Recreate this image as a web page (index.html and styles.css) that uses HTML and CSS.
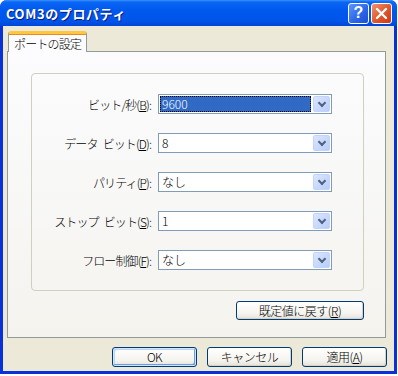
FILE: index.html
```html
<!DOCTYPE html>
<html lang="ja">
<head>
  <meta charset="UTF-8">
  <title>COM3のプロパティ</title>
  <link rel="stylesheet" href="styles.css">
</head>
<body>

<div class="window">
  <div class="titlebar">
    <span class="title">COM3のプロパティ</span>
    <div class="capBtn help">?</div>
    <div class="capBtn close">
      <svg width="13" height="13" viewBox="0 0 13 13"><path d="M2 2 L11 11 M11 2 L2 11" stroke="#fff" stroke-width="2.4" stroke-linecap="round"/></svg>
    </div>
  </div>

  <div class="client">
    <div class="tabs">
      <div class="tab active">ポートの設定</div>
    </div>

    <div class="panel">
      <div class="group">
        <div class="row">
          <label>ビット/秒(<u>B</u>):</label>
          <div class="combo"><span class="value selected">9600</span><span class="drop"></span></div>
        </div>
        <div class="row">
          <label>データ&ensp;ビット(<u>D</u>):</label>
          <div class="combo"><span class="value">8</span><span class="drop"></span></div>
        </div>
        <div class="row">
          <label>パリティ(<u>P</u>):</label>
          <div class="combo"><span class="value">なし</span><span class="drop"></span></div>
        </div>
        <div class="row">
          <label>ストップ&ensp;ビット(<u>S</u>):</label>
          <div class="combo"><span class="value">1</span><span class="drop"></span></div>
        </div>
        <div class="row">
          <label>フロー制御(<u>F</u>):</label>
          <div class="combo"><span class="value">なし</span><span class="drop"></span></div>
        </div>
      </div>
      <div class="resetRow">
        <button class="btn reset">既定値に戻す(<u>R</u>)</button>
      </div>
    </div>

    <div class="buttons">
      <button class="btn default">OK</button>
      <button class="btn">キャンセル</button>
      <button class="btn">適用(<u>A</u>)</button>
    </div>
  </div>
</div>

</body>
</html>
```

FILE: styles.css
```css
* {
  box-sizing: border-box;
  margin: 0;
  padding: 0;
}

body {
  background-color: #fff;
  font-family: "Noto Sans CJK JP", "DejaVu Sans", sans-serif;
  font-size: 12px;
  font-weight: 300;
  color: #000;
}

.window {
  width: 397px;
  height: 374px;
  display: flex;
  flex-direction: column;
  background: #0831d9;
  border-radius: 7px 7px 0 0;
}

.titlebar {
  height: 26px;
  display: flex;
  align-items: center;
  padding: 0 5px 0 6px;
  border-radius: 7px 7px 0 0;
  background: linear-gradient(#3d95ff 0, #0a66f4 2px, #0058ee 40%, #0055e8 80%, #0046d8 100%);
}

.title {
  flex: 1;
  color: #fff;
  font-weight: bold;
  font-size: 13px;
  letter-spacing: 0.6px;
  text-shadow: 1px 1px #0a1883;
}

.capBtn {
  width: 21px;
  height: 21px;
  border: 1px solid #fff;
  border-radius: 3px;
  display: flex;
  align-items: center;
  justify-content: center;
  margin-left: 2px;
}

.help {
  background: linear-gradient(135deg, #5d95ff, #2a64e6 60%, #1c4fd0);
  color: #fff;
  font-family: "Liberation Sans", sans-serif;
  font-weight: bold;
  font-size: 16px;
}

.close {
  background: linear-gradient(135deg, #f0926e, #e2542a 55%, #c83a14);
}

.client {
  flex: 1;
  margin: 0 3px 3px;
  background: #ece9d8;
  display: flex;
  flex-direction: column;
  padding-top: 5px;
}

.tabs {
  display: flex;
  padding-left: 5px;
  height: 20px;
  position: relative;
  z-index: 1;
}

.tab {
  width: 79px;
  height: 21px;
  padding: 2px 0 0 5px;
  background: #fcfcfe;
  border: 1px solid #919b9c;
  border-bottom: none;
  border-top: 3px solid #ffc83c;
  border-radius: 3px 3px 0 0;
  box-shadow: inset 0 1px 0 #e68b2c;
  line-height: 15px;
  white-space: nowrap;
  letter-spacing: -0.8px;
}

.panel {
  margin-left: 4px;
  width: 379px;
  height: 287px;
  border: 1px solid #919b9c;
  background: linear-gradient(#fcfcfe, #f4f3ee);
  padding: 21px 21px 0 23px;
}

.group {
  height: 218px;
  border: 1px solid #d0d0bf;
  border-radius: 4px;
  padding-top: 20px;
  display: flex;
  flex-direction: column;
  gap: 19px;
}

.row {
  display: flex;
  align-items: center;
  height: 20px;
}

.row label {
  width: 120px;
  text-align: right;
  padding-right: 1px;
  letter-spacing: -0.9px;
  margin-right: 6px;
  white-space: nowrap;
}

.combo {
  width: 174px;
  height: 20px;
  border: 1px solid #7f9db9;
  background: #fff;
  display: flex;
  align-items: center;
  padding: 1px;
}

.value {
  flex: 1;
  height: 16px;
  line-height: 16px;
  padding-left: 2px;
  margin-right: 2px;
}

.value.selected {
  background: #316ac5;
  color: #fff;
  outline: 1px dotted #000;
  outline-offset: -1px;
}

.drop {
  width: 17px;
  height: 16px;
  border-radius: 2px;
  background: linear-gradient(135deg, #dbe6fd, #b9cdf8);
  border: 1px solid #c3d3fd;
  position: relative;
}

.drop::after {
  content: '';
  position: absolute;
  left: 5px;
  top: 3px;
  width: 4px;
  height: 4px;
  border-right: 2px solid #4d6185;
  border-bottom: 2px solid #4d6185;
  transform: rotate(45deg);
}

.resetRow {
  display: flex;
  justify-content: flex-end;
  padding-top: 10px;
}

.btn {
  font-family: "Noto Sans CJK JP", "DejaVu Sans", sans-serif;
  font-size: 12px;
  font-weight: 300;
  width: 85px;
  height: 20px;
  line-height: 16px;
  border: 1px solid #003c74;
  border-radius: 3px;
  background: linear-gradient(#ffffff, #f4f3ee 70%, #e3e1d6);
  box-shadow: inset -1px -1px 0 #d6d0c5;
  color: #000;
  letter-spacing: -0.5px;
}

.btn.reset {
  width: 128px;
  height: 19px;
}

.btn.default {
  box-shadow: inset 0 0 0 1px #cee7ff, inset -2px -2px 0 #699bea, inset 2px 2px 0 #bcd4f6;
}

.buttons {
  display: flex;
  justify-content: flex-end;
  gap: 10px;
  padding: 9px 7px 0 0;
}
```
